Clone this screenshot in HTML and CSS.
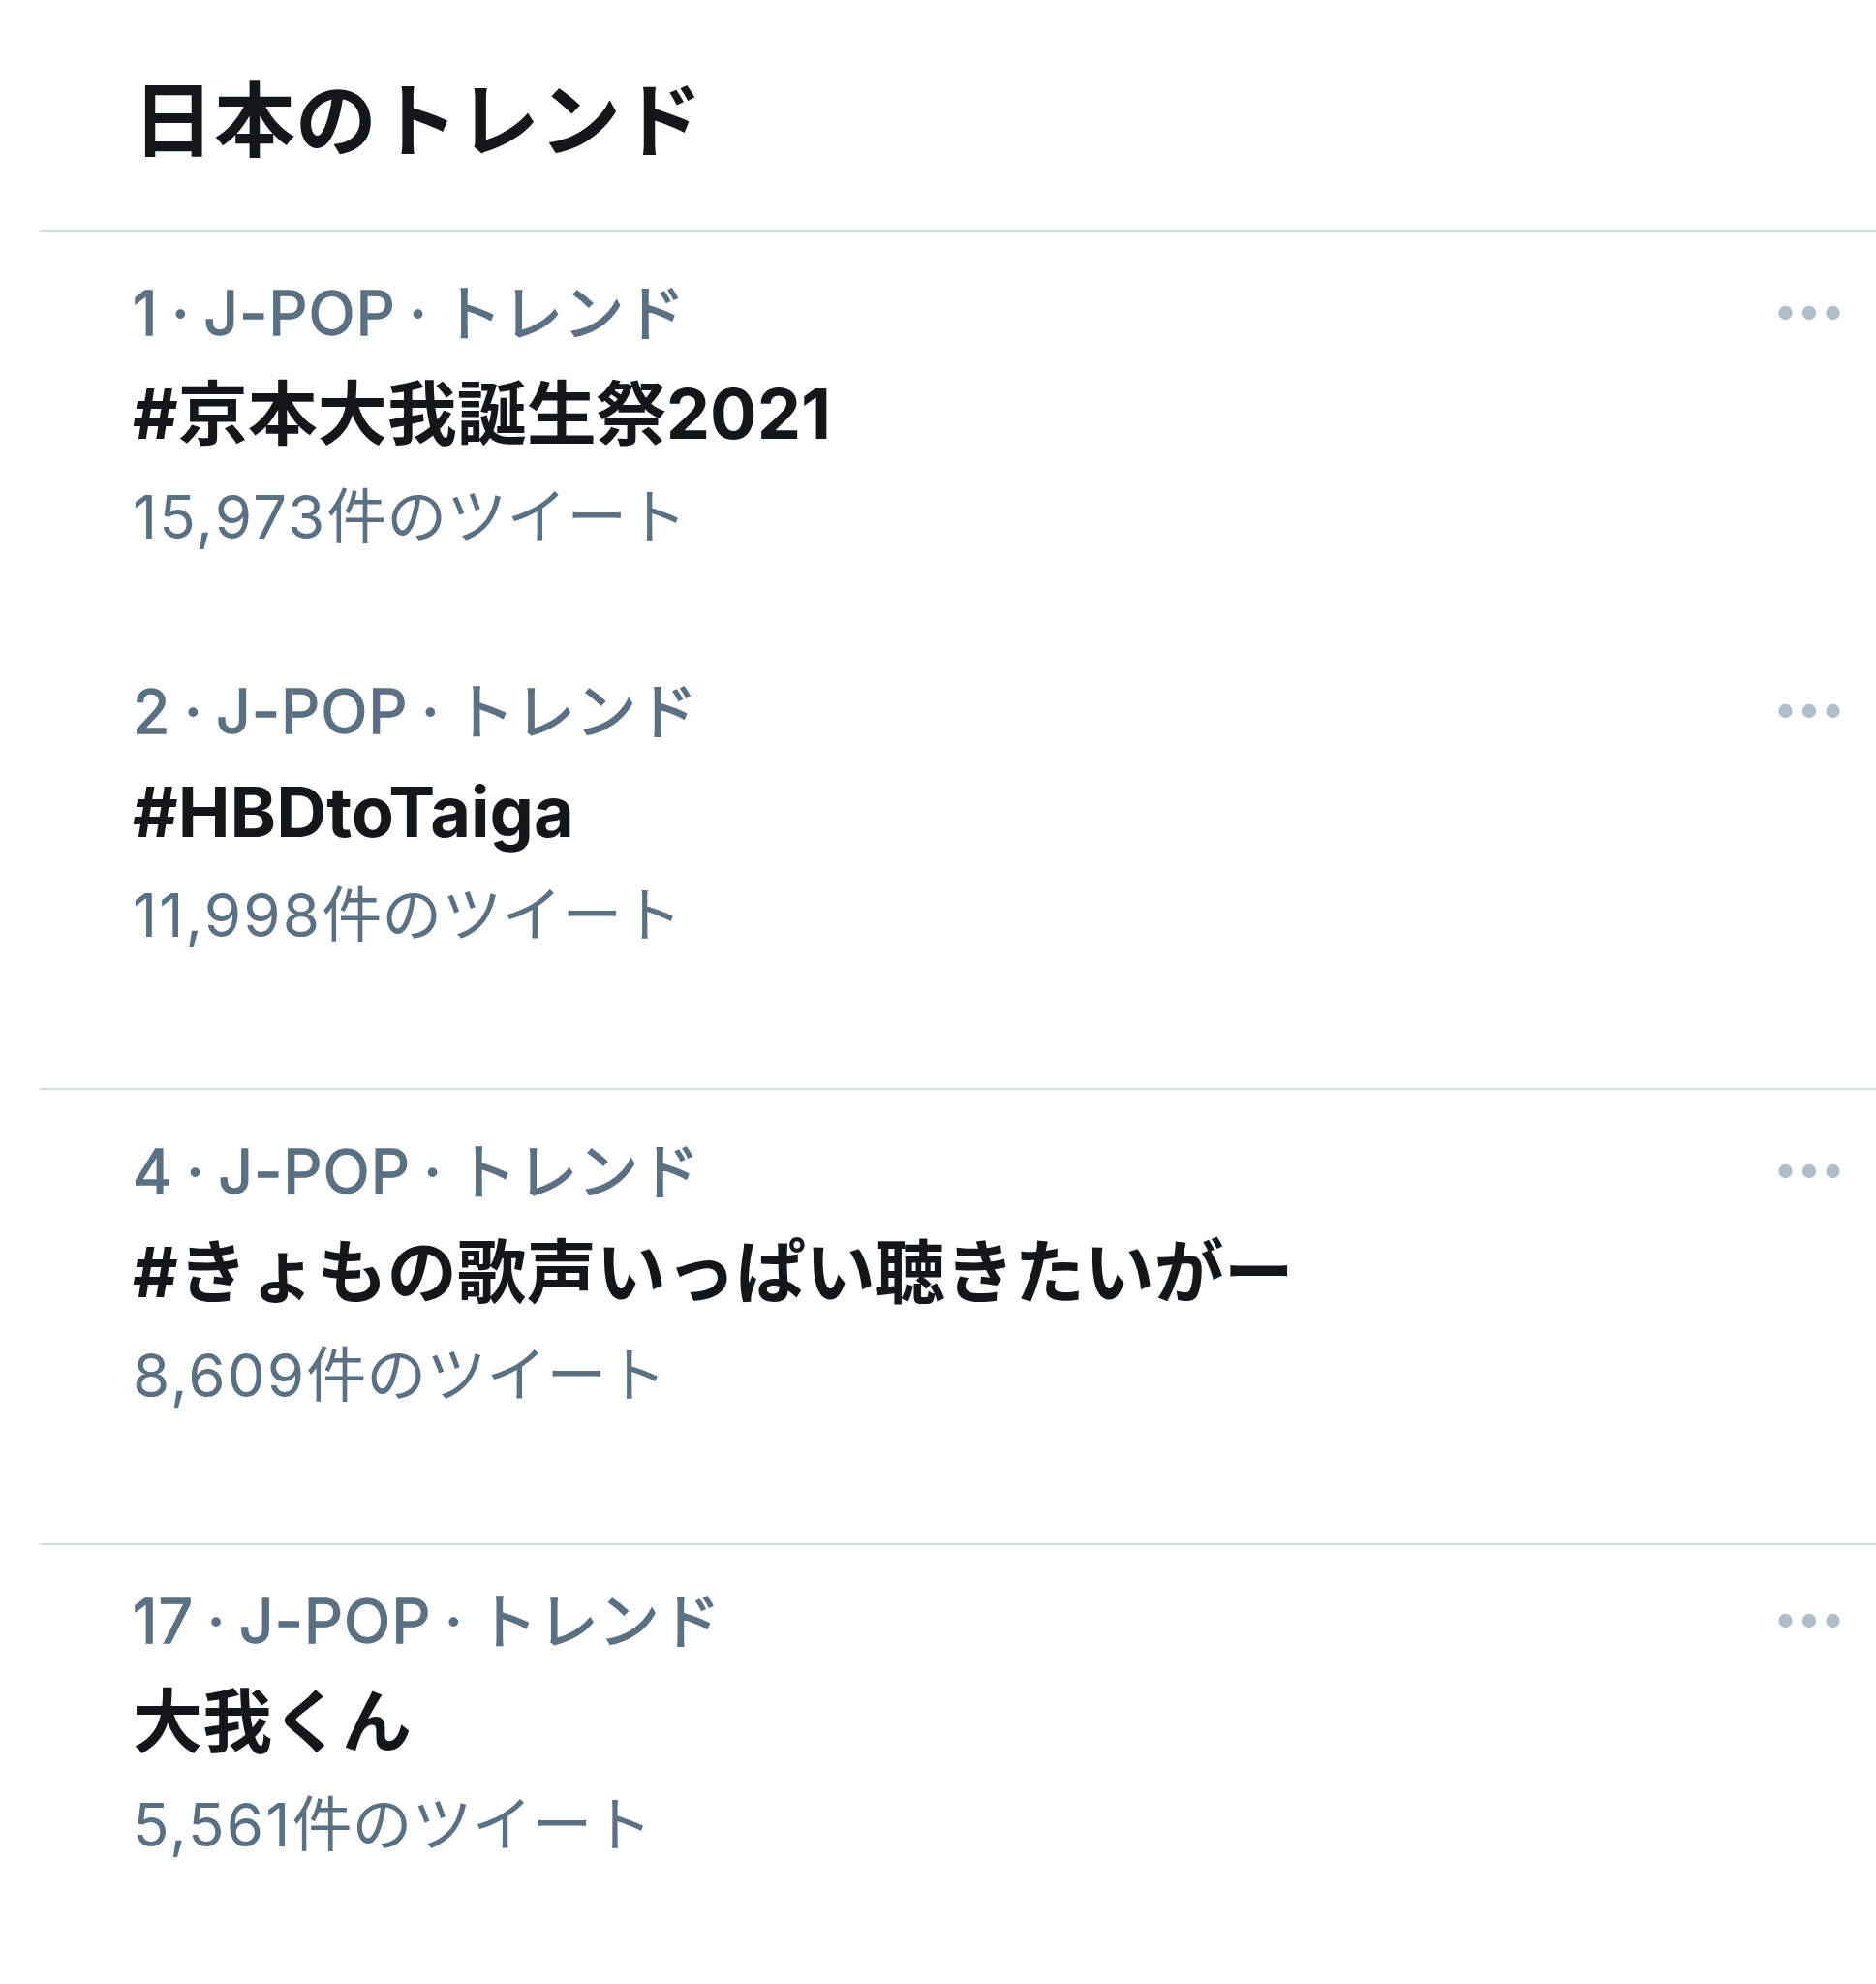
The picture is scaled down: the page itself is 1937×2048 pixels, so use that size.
FILE: index.html
```html
<!DOCTYPE html>
<html lang="ja">
<head>
<meta charset="utf-8">
<title>日本のトレンド</title>
<link rel="stylesheet" href="styles.css">
</head>
<body>
<main class="trends">
  <h1 class="trends-header">日本のトレンド</h1>

  <section class="trend-group">
    <article class="trend">
      <div class="trend-body">
        <div class="trend-meta"><span class="meta-latin">1 · J-POP · </span>トレンド</div>
        <div class="trend-name">#京本大我誕生祭2021</div>
        <div class="trend-count"><span class="num">15,973</span>件のツイート</div>
      </div>
      <div class="trend-more">
        <svg viewBox="0 0 64 16" width="64" height="16"><circle cx="7.5" cy="8" r="7.2"/><circle cx="32" cy="8" r="7.2"/><circle cx="56.5" cy="8" r="7.2"/></svg>
      </div>
    </article>
    <article class="trend">
      <div class="trend-body">
        <div class="trend-meta"><span class="meta-latin">2 · J-POP · </span>トレンド</div>
        <div class="trend-name">#HBDtoTaiga</div>
        <div class="trend-count"><span class="num">11,998</span>件のツイート</div>
      </div>
      <div class="trend-more">
        <svg viewBox="0 0 64 16" width="64" height="16"><circle cx="7.5" cy="8" r="7.2"/><circle cx="32" cy="8" r="7.2"/><circle cx="56.5" cy="8" r="7.2"/></svg>
      </div>
    </article>
  </section>

  <section class="trend-group trend-group-mid">
    <article class="trend">
      <div class="trend-body">
        <div class="trend-meta"><span class="meta-latin">4 · J-POP · </span>トレンド</div>
        <div class="trend-name">#きょもの歌声いっぱい聴きたいがー</div>
        <div class="trend-count"><span class="num">8,609</span>件のツイート</div>
      </div>
      <div class="trend-more">
        <svg viewBox="0 0 64 16" width="64" height="16"><circle cx="7.5" cy="8" r="7.2"/><circle cx="32" cy="8" r="7.2"/><circle cx="56.5" cy="8" r="7.2"/></svg>
      </div>
    </article>
  </section>

  <section class="trend-group trend-group-last">
    <article class="trend">
      <div class="trend-body">
        <div class="trend-meta"><span class="meta-latin">17 · J-POP · </span>トレンド</div>
        <div class="trend-name">大我くん</div>
        <div class="trend-count"><span class="num">5,561</span>件のツイート</div>
      </div>
      <div class="trend-more">
        <svg viewBox="0 0 64 16" width="64" height="16"><circle cx="7.5" cy="8" r="7.2"/><circle cx="32" cy="8" r="7.2"/><circle cx="56.5" cy="8" r="7.2"/></svg>
      </div>
    </article>
  </section>
</main>
</body>
</html>
```

FILE: styles.css
```css
html, body {
  margin: 0;
  padding: 0;
  background: #ffffff;
}

body {
  font-family: Inter, "Noto Sans CJK JP", sans-serif;
  color: #0f1419;
}

.trends {
  display: flex;
  flex-direction: column;
  min-height: 2048px;
}

.trends-header {
  margin: 0;
  padding: 65px 0 52px 137px;
  font-size: 84px;
  line-height: 120px;
  font-weight: 700;
  color: #14171a;
}

.trend-group {
  margin-left: 41px;
  border-top: 2px solid #d2dbe1;
  padding-bottom: 62px;
}

.trend-group-mid {
  padding-bottom: 57px;
}

.trend {
  display: flex;
  justify-content: space-between;
  align-items: flex-start;
  padding: 32px 37px 67px 96px;
}

.trend-group-last .trend {
  padding-top: 26px;
}

.trend-body {
  display: flex;
  flex-direction: column;
}

.trend-meta {
  font-size: 63px;
  line-height: 104px;
  font-weight: 400;
  color: #5b7083;
  -webkit-text-stroke: 1.4px #5b7083;
  word-spacing: -5px;
}

.meta-latin {
  letter-spacing: 1px;
}

.trend-name {
  font-size: 72px;
  line-height: 104px;
  font-weight: 700;
  color: #14171a;
}

.trend-count {
  font-size: 62px;
  line-height: 104px;
  font-weight: 400;
  color: #5b7083;
  padding-top: 3px;
  margin-bottom: -3px;
}

.num {
  letter-spacing: 2px;
}

.trend-more {
  height: 104px;
  display: flex;
  align-items: center;
}

.trend-more svg {
  display: block;
  fill: #b0bec9;
}
```
